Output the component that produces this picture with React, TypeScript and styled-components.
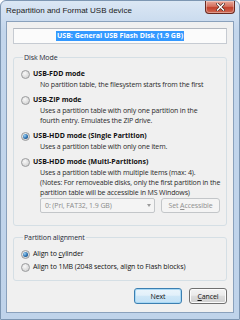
import React from "react";
import styled, { createGlobalStyle } from "styled-components";

const Global = createGlobalStyle`
  html, body { margin: 0; padding: 0; width: 240px; height: 320px; overflow: hidden; background: #ffffff; }
  * { box-sizing: border-box; }
`;

const Window = styled.div`
  width: 240px;
  height: 320px;
  display: flex;
  flex-direction: column;
  background: linear-gradient(#dbe7f4, #c3d6ec 30px, #bfd3ea);
  border: 1px solid #7d96b2;
  border-radius: 6px 6px 0 0;
  padding: 0 5px 6px 5px;
  font-family: "Open Sans", "Noto Sans", sans-serif;
  color: #000;
`;

const TitleBar = styled.div`
  height: 20px;
  display: flex;
  align-items: flex-start;
  justify-content: space-between;
`;

const Title = styled.span`
  font-family: "Liberation Sans", Arial, sans-serif;
  font-size: 8px;
  line-height: 20px;
  color: #1a1a1a;
`;

const CloseButton = styled.div`
  width: 30px;
  height: 13px;
  margin-right: -1px;
  display: flex;
  align-items: center;
  justify-content: center;
  border: 1px solid #6a2a20;
  border-top: none;
  border-radius: 0 0 4px 4px;
  background: linear-gradient(#e9a899, #d4705e 45%, #c2412c 55%, #cf6a55);
  box-shadow: inset 0 0 0 1px rgba(255, 255, 255, 0.35);
`;

const Client = styled.div`
  flex: 1;
  display: flex;
  flex-direction: column;
  background: #f0f0f0;
  border: 1px solid #8aa1bc;
  padding: 6px 6px 8px 6px;
`;

const DeviceBox = styled.div`
  height: 16px;
  display: flex;
  align-items: center;
  justify-content: center;
  background: #fbfbfb;
  border: 1px solid #c6cbd2;
  border-top-color: #b3b8c0;
`;

const Selected = styled.span`
  background: #3399ff;
  color: #fff;
  font-weight: 700;
  font-size: 7px;
  line-height: 10px;
  padding: 0 1px;
`;

const Group = styled.fieldset<{ $mt: number; $pt: number; $pb: number }>`
  margin: ${(p) => p.$mt}px 0 0 0;
  padding: ${(p) => p.$pt}px 6px ${(p) => p.$pb}px 7px;
  border: 1px solid #d5dfe5;
  border-radius: 3px;
  min-width: 0;
`;

const Legend = styled.legend`
  font-size: 7px;
  line-height: 9px;
  padding: 0 1px;
  margin-left: 2px;
  color: #1e2b3a;
  letter-spacing: -0.1px;
`;

const Options = styled.div<{ $gap: number }>`
  display: flex;
  flex-direction: column;
  gap: ${(p) => p.$gap}px;
`;

const Option = styled.div`
  display: flex;
  flex-direction: column;
`;

const RadioRow = styled.div`
  height: 10px;
  display: flex;
  align-items: center;
  gap: 3px;
`;

const Radio = styled.span<{ $on?: boolean }>`
  width: 9px;
  height: 9px;
  border-radius: 50%;
  border: 1px solid #9a9b9d;
  background: radial-gradient(circle at 40% 35%, #f8f8f8, #d8d8d8 70%, #cfcfcf);
  display: flex;
  align-items: center;
  justify-content: center;
  flex: none;
  &::after {
    content: "";
    display: ${(p) => (p.$on ? "block" : "none")};
    width: 5px;
    height: 5px;
    border-radius: 50%;
    background: radial-gradient(circle at 35% 35%, #9fd3f5, #2a6fae 55%, #0f3d6e);
  }
`;

const Heading = styled.span<{ $bold?: boolean }>`
  font-size: 7px;
  line-height: 10px;
  white-space: nowrap;
  font-weight: ${(p) => (p.$bold ? 700 : 400)};
  letter-spacing: ${(p) => (p.$bold ? "0" : "-0.1px")};
  color: #111;
`;

const Desc = styled.div`
  margin: 1px 0 0 19px;
  font-size: 7px;
  line-height: 10px;
  letter-spacing: -0.15px;
  white-space: nowrap;
  color: #2b2b2b;
`;

const DisabledRow = styled.div`
  margin-left: 19px;
  display: flex;
  gap: 6px;
  height: 15px;
`;

const Combo = styled.div`
  width: 115px;
  display: flex;
  align-items: center;
  justify-content: space-between;
  padding: 0 3px 0 4px;
  border: 1px solid #c3c6c9;
  border-radius: 2px;
  background: #f4f4f4;
  font-size: 7px;
  letter-spacing: -0.1px;
  color: #8a8a8a;
`;

const Arrow = styled.span`
  width: 0;
  height: 0;
  border-left: 2.5px solid transparent;
  border-right: 2.5px solid transparent;
  border-top: 3px solid #9a9a9a;
`;

const Button = styled.div<{ $w: number; $variant: "default" | "normal" | "disabled" }>`
  width: ${(p) => p.$w}px;
  height: ${(p) => (p.$variant === "disabled" ? 15 : 16)}px;
  display: flex;
  align-items: center;
  justify-content: center;
  border-radius: 3px;
  font-size: 7px;
  letter-spacing: -0.1px;
  border: 1px solid
    ${(p) => (p.$variant === "default" ? "#3c7fb1" : p.$variant === "normal" ? "#707070" : "#c3c6c9")};
  color: ${(p) => (p.$variant === "disabled" ? "#8f8f8f" : "#111")};
  background: ${(p) =>
    p.$variant === "disabled"
      ? "#f4f4f4"
      : p.$variant === "default"
      ? "linear-gradient(#eaf5fc, #e2f0fa 45%, #cfe7f7 50%, #c2e1f6)"
      : "linear-gradient(#f3f3f3, #ebebeb 45%, #dddddd 50%, #cfcfcf)"};
  box-shadow: inset 0 0 0 1px
    ${(p) => (p.$variant === "default" ? "#a7d8f5" : p.$variant === "normal" ? "#fcfcfc" : "#f4f4f4")};
`;

const Footer = styled.div`
  margin-top: auto;
  display: flex;
  justify-content: flex-end;
  gap: 7px;
`;

const U = styled.span`
  text-decoration: underline;
`;

export default function App() {
  return (
    <>
      <Global />
      <Window>
        <TitleBar>
          <Title>Repartition and Format USB device</Title>
          <CloseButton>
            <svg width="9" height="8" viewBox="0 0 9 8">
              <path d="M1.5 1 L7.5 7 M7.5 1 L1.5 7" stroke="#3a1a14" strokeWidth="2.6" strokeLinecap="square" />
              <path d="M1.5 1 L7.5 7 M7.5 1 L1.5 7" stroke="#ffffff" strokeWidth="1.5" strokeLinecap="square" />
            </svg>
          </CloseButton>
        </TitleBar>
        <Client>
          <DeviceBox>
            <Selected>USB: General USB Flash Disk (1.9 GB)</Selected>
          </DeviceBox>
          <Group $mt={9} $pt={7} $pb={12}>
            <Legend>Disk Mode</Legend>
            <Options $gap={5}>
              <Option>
                <RadioRow>
                  <Radio />
                  <Heading $bold>USB-FDD mode</Heading>
                </RadioRow>
                <Desc>No partition table, the filesystem starts from the first</Desc>
              </Option>
              <Option>
                <RadioRow>
                  <Radio />
                  <Heading $bold>USB-ZIP mode</Heading>
                </RadioRow>
                <Desc>
                  Uses a partition table with only one partition in the
                  <br />
                  fourth entry. Emulates the ZIP drive.
                </Desc>
              </Option>
              <Option>
                <RadioRow>
                  <Radio $on />
                  <Heading $bold>USB-HDD mode (Single Partition)</Heading>
                </RadioRow>
                <Desc>Uses a partition table with only one item.</Desc>
              </Option>
              <Option>
                <RadioRow>
                  <Radio />
                  <Heading $bold>USB-HDD mode (Multi-Partitions)</Heading>
                </RadioRow>
                <Desc>
                  Uses a partition table with multiple items (max: 4).
                  <br />
                  (Notes: For removeable disks, only the first partition in the
                  <br />
                  partition table will be accessible in MS Windows)
                </Desc>
                <DisabledRow>
                  <Combo>
                    <span>0: (Pri, FAT32, 1.9 GB)</span>
                    <Arrow />
                  </Combo>
                  <Button $w={59} $variant="disabled">
                    <span>
                      Set <U>A</U>ccessible
                    </span>
                  </Button>
                </DisabledRow>
              </Option>
            </Options>
          </Group>
          <Group $mt={7} $pt={7} $pb={8}>
            <Legend>Partition alignment</Legend>
            <Options $gap={3}>
              <RadioRow>
                <Radio $on />
                <Heading>
                  Align to <U>c</U>ylinder
                </Heading>
              </RadioRow>
              <RadioRow>
                <Radio />
                <Heading>Align to 1MB (2048 sectors, align to Flash blocks)</Heading>
              </RadioRow>
            </Options>
          </Group>
          <Footer>
            <Button $w={48} $variant="default">Next</Button>
            <Button $w={38} $variant="normal">
              <span>
                <U>C</U>ancel
              </span>
            </Button>
          </Footer>
        </Client>
      </Window>
    </>
  );
}
